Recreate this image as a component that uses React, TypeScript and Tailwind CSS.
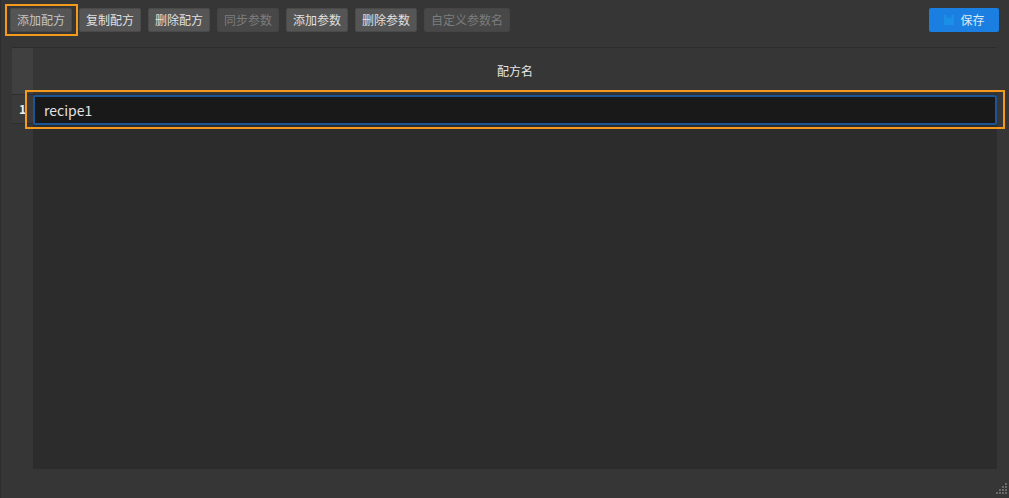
import React from "react";

const font = "font-['Noto_Sans_CJK_SC','Liberation_Sans',sans-serif]";

function Btn({ label, disabled, wide, dim }: { label: string; disabled?: boolean; wide?: boolean; dim?: boolean }) {
  return (
    <button
      className={`block h-6 rounded-[2px] border text-xs leading-none ${wide ? "w-[86px]" : "w-[62px]"} ${disabled ? "border-[#454545] bg-[#484848] text-[#7c7c7c]" : dim ? "border-[#4a4a4a] bg-[#555555] text-[#c4c4c4]" : "border-[#4a4a4a] bg-[#555555] text-[#e0e0e0]"}`}
    >
      {label}
    </button>
  );
}

export default function App() {
  return (
    <div className={`relative flex h-[498px] w-[1009px] flex-col overflow-hidden border-l border-[#2e2e2e] bg-[#363636] ${font}`}>
      <div className="flex items-center justify-between pl-[9px] pr-[10px] pt-2">
        <div className="flex gap-[7px]">
          <div className="relative">
            <Btn label="添加配方" dim />
            <div className="pointer-events-none absolute -left-[5px] -right-[6px] -top-1 -bottom-1 border-2 border-[#f39a1e]" />
          </div>
          <Btn label="复制配方" />
          <Btn label="删除配方" />
          <Btn label="同步参数" disabled />
          <Btn label="添加参数" />
          <Btn label="删除参数" />
          <Btn label="自定义参数名" disabled wide />
        </div>
        <button className="flex h-6 w-[70px] items-center justify-center gap-[5px] rounded-[2px] bg-[#1a7fe0] text-xs text-[#dbe9f7]">
          <svg width="12" height="12" viewBox="0 0 12 12" className="text-[#1a8fe6]">
            <path d="M1 1h2.5v3h5V1H11v10H1z" fill="currentColor" />
          </svg>
          保存
        </button>
      </div>

      <div className="mb-[29px] ml-[11px] mr-3 mt-[15px] flex flex-1 flex-col border-t border-[#2c2c2c]">
        <div className="flex h-[47px] border-b border-[#2e2e2e]">
          <div className="w-[21px] rounded-tl-[2px] bg-[#404040]" />
          <div className="flex flex-1 items-center justify-center bg-[#363636] text-xs text-[#e6e6e6]">配方名</div>
        </div>
        <div className="flex flex-1">
          <div className="flex w-[21px] flex-col">
            <div className="flex h-[29px] items-center justify-end border-b border-[#2e2e2e] bg-[#3a3a3a] pr-[7px] text-xs font-bold text-[#f0f0f0]">
              1
            </div>
          </div>
          <div className="relative flex-1 bg-[#2c2c2c]">
            <div className="flex h-[30px] items-center rounded-[2px] border-2 border-[#1b5596] bg-[#191919] pl-[9px] text-sm text-[#e2e2e2]">
              recipe1
            </div>
            <div className="pointer-events-none absolute -left-2 -right-2 -top-[5px] h-[39px] border-2 border-[#f39a1e]" />
          </div>
        </div>
      </div>

      <svg className="absolute bottom-[3px] right-[1px]" width="12" height="12" viewBox="0 0 12 12">
        <g fill="#6a6a6a">
          <rect x="9" y="0" width="2" height="2" />
          <rect x="6" y="3" width="2" height="2" />
          <rect x="9" y="3" width="2" height="2" />
          <rect x="3" y="6" width="2" height="2" />
          <rect x="6" y="6" width="2" height="2" />
          <rect x="9" y="6" width="2" height="2" />
          <rect x="0" y="9" width="2" height="2" />
          <rect x="3" y="9" width="2" height="2" />
          <rect x="6" y="9" width="2" height="2" />
          <rect x="9" y="9" width="2" height="2" />
        </g>
      </svg>
    </div>
  );
}
